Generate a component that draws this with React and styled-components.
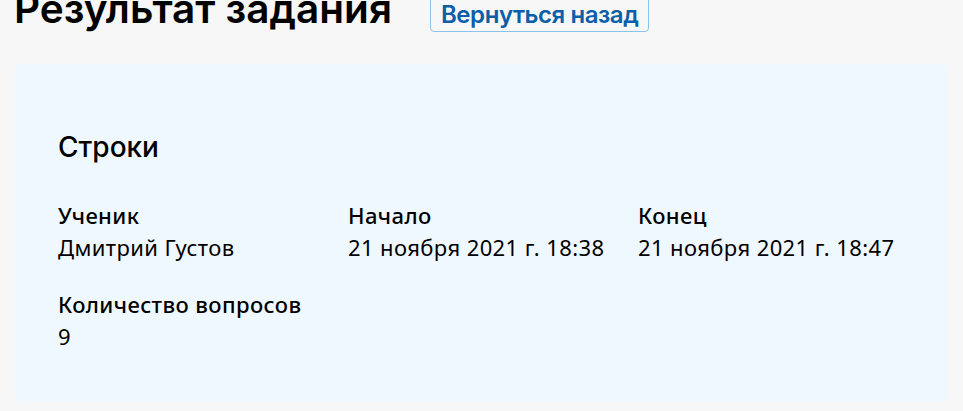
import React from "react";
import styled, { createGlobalStyle } from "styled-components";

const Global = createGlobalStyle`
  html, body { margin: 0; padding: 0; background: #f7f7f7; }
  body { font-family: "Noto Sans", "Open Sans", sans-serif; color: #000; overflow: hidden; }
`;

const Page = styled.div`
  padding: 0 16px 0 14px;
  margin-top: -15px;
`;

const Header = styled.header`
  display: flex;
  align-items: flex-start;
  gap: 38px;
  height: 48px;
  margin-bottom: 31px;
`;

const Title = styled.h1`
  margin: 0;
  font-family: "Inter", sans-serif;
  font-weight: 600;
  font-size: 40.5px;
  line-height: 48px;
  white-space: nowrap;
`;

const BackButton = styled.button`
  height: 36px;
  margin-top: 11px;
  padding: 2px 10px 0;
  background: transparent;
  border: 1px solid #8cc3ea;
  border-radius: 4px;
  color: #0b5ea8;
  font-family: "Inter", sans-serif;
  font-weight: 600;
  font-size: 24px;
  letter-spacing: -0.45px;
  line-height: 1;
  white-space: nowrap;
  cursor: pointer;
`;

const Card = styled.section`
  background: #f0f8ff;
  border-radius: 8px;
  padding: 67px 44px 40px;
  height: 337px;
  box-sizing: border-box;
`;

const SectionTitle = styled.h2`
  margin: 0 0 36px;
  font-family: "Inter", sans-serif;
  font-weight: 500;
  font-size: 28px;
  line-height: 32px;
`;

const Grid = styled.div`
  display: grid;
  grid-template-columns: repeat(3, 290px);
  row-gap: 25px;
`;

const Field = styled.div`
  display: flex;
  flex-direction: column;
`;

const Label = styled.div`
  font-weight: 500;
  font-size: 22px;
  letter-spacing: 0.4px;
  line-height: 32px;
  white-space: nowrap;
`;

const Value = styled.div`
  font-weight: 400;
  font-size: 22px;
  letter-spacing: 0.4px;
  line-height: 32px;
  white-space: nowrap;
`;

const fields = [
  ["Ученик", "Дмитрий Густов"],
  ["Начало", "21 ноября 2021 г. 18:38"],
  ["Конец", "21 ноября 2021 г. 18:47"],
  ["Количество вопросов", "9"],
];

export default function App() {
  return (
    <>
      <Global />
      <Page>
        <Header>
          <Title>Результат задания</Title>
          <BackButton>Вернуться назад</BackButton>
        </Header>
        <Card>
          <SectionTitle>Строки</SectionTitle>
          <Grid>
            {fields.map(([l, v]) => (
              <Field key={l}>
                <Label>{l}</Label>
                <Value>{v}</Value>
              </Field>
            ))}
          </Grid>
        </Card>
      </Page>
    </>
  );
}
